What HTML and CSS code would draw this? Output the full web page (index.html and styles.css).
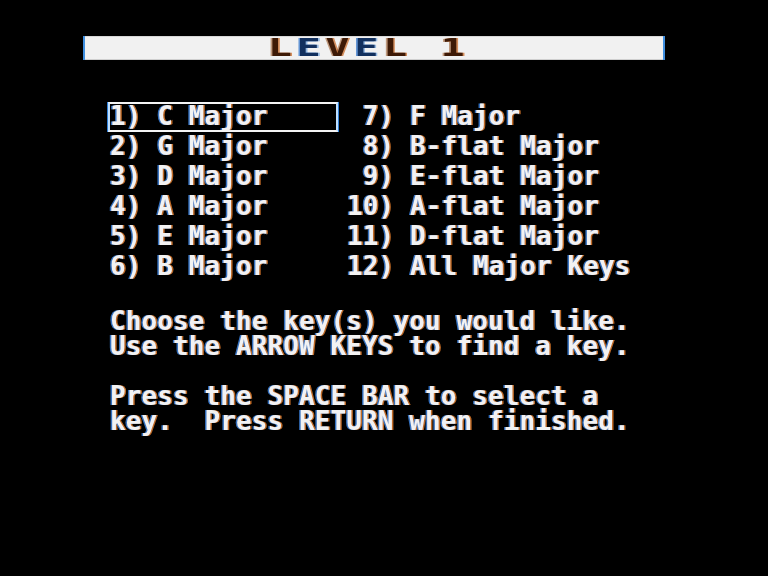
FILE: index.html
```html
<!DOCTYPE html>
<html>
<head>
<meta charset="utf-8">
<link rel="stylesheet" href="styles.css">
</head>
<body>
<div class="screen">
  <div class="banner"><span class="banner-text">L<span class="cool">E</span>V<span class="cool">E</span>L 1</span></div>
  <div class="menu">
    <div class="item selected">1) C Major</div>
    <div class="item"> 7) F Major</div>
    <div class="item">2) G Major</div>
    <div class="item"> 8) B-flat Major</div>
    <div class="item">3) D Major</div>
    <div class="item"> 9) E-flat Major</div>
    <div class="item">4) A Major</div>
    <div class="item">10) A-flat Major</div>
    <div class="item">5) E Major</div>
    <div class="item">11) D-flat Major</div>
    <div class="item">6) B Major</div>
    <div class="item">12) All Major Keys</div>
  </div>
  <div class="instructions">
    <p class="para">Choose the key(s) you would like.<br>Use the ARROW KEYS to find a key.</p>
    <p class="para">Press the SPACE BAR to select a<br>key.  Press RETURN when finished.</p>
  </div>
</div>
</body>
</html>
```
FILE: styles.css
```css
html, body {
  margin: 0;
  padding: 0;
  background: #000;
}
.screen {
  width: 768px;
  height: 576px;
  padding-top: 36px;
  box-sizing: border-box;
  font-family: "DejaVu Sans Mono", "Liberation Mono", monospace;
  font-weight: bold;
  color: #f2f2f2;
  overflow: hidden;
  filter: blur(0.35px);
}
.banner {
  margin-left: 85px;
  width: 578px;
  height: 24px;
  background: #f1f1f1;
  box-shadow: -2px 0 0 #3f8fe0, 2px 0 0 #3f8fe0;
  border-top: 1px solid #d8d8d8;
  border-bottom: 1px solid #cfcfcf;
  box-sizing: border-box;
  padding-left: 183px;
  font-size: 24px;
  line-height: 22px;
  white-space: pre;
}
.banner-text {
  display: inline-block;
  transform: scaleX(1.65);
  transform-origin: left center;
  letter-spacing: 3px;
  color: #3e1a06;
  text-shadow: -1px 0 rgba(150, 80, 30, 0.55), 1px 0 rgba(200, 100, 30, 0.7);
}
.cool {
  color: #12305e;
  text-shadow: -1px 0 rgba(40, 110, 200, 0.7), 1px 0 rgba(60, 130, 210, 0.5);
}
.menu {
  margin-top: 41px;
  padding-left: 110px;
  display: grid;
  grid-template-columns: 237px auto;
  grid-auto-rows: 30px;
  font-size: 26px;
  line-height: 30px;
  letter-spacing: 0.1px;
}
.item, .para {
  white-space: pre;
  text-shadow: -1.5px 0 rgba(70, 150, 255, 0.75), 1.5px 0 rgba(255, 140, 50, 0.75);
}
.selected {
  position: relative;
}
.selected::before {
  content: "";
  position: absolute;
  left: -2px;
  top: 1px;
  width: 230px;
  height: 30px;
  box-sizing: border-box;
  border: 2px solid #f4f4f4;
  border-left-color: #bfe0ff;
  border-right-color: #bfe0ff;
  box-shadow: -1px 0 0 #2f7fd8, 1px 0 0 #2f7fd8;
}
.instructions {
  margin-top: 28px;
  padding-left: 110px;
  font-size: 26px;
  line-height: 25px;
  letter-spacing: 0.1px;
  display: flex;
  flex-direction: column;
  gap: 25px;
}
.para {
  margin: 0;
}
```
